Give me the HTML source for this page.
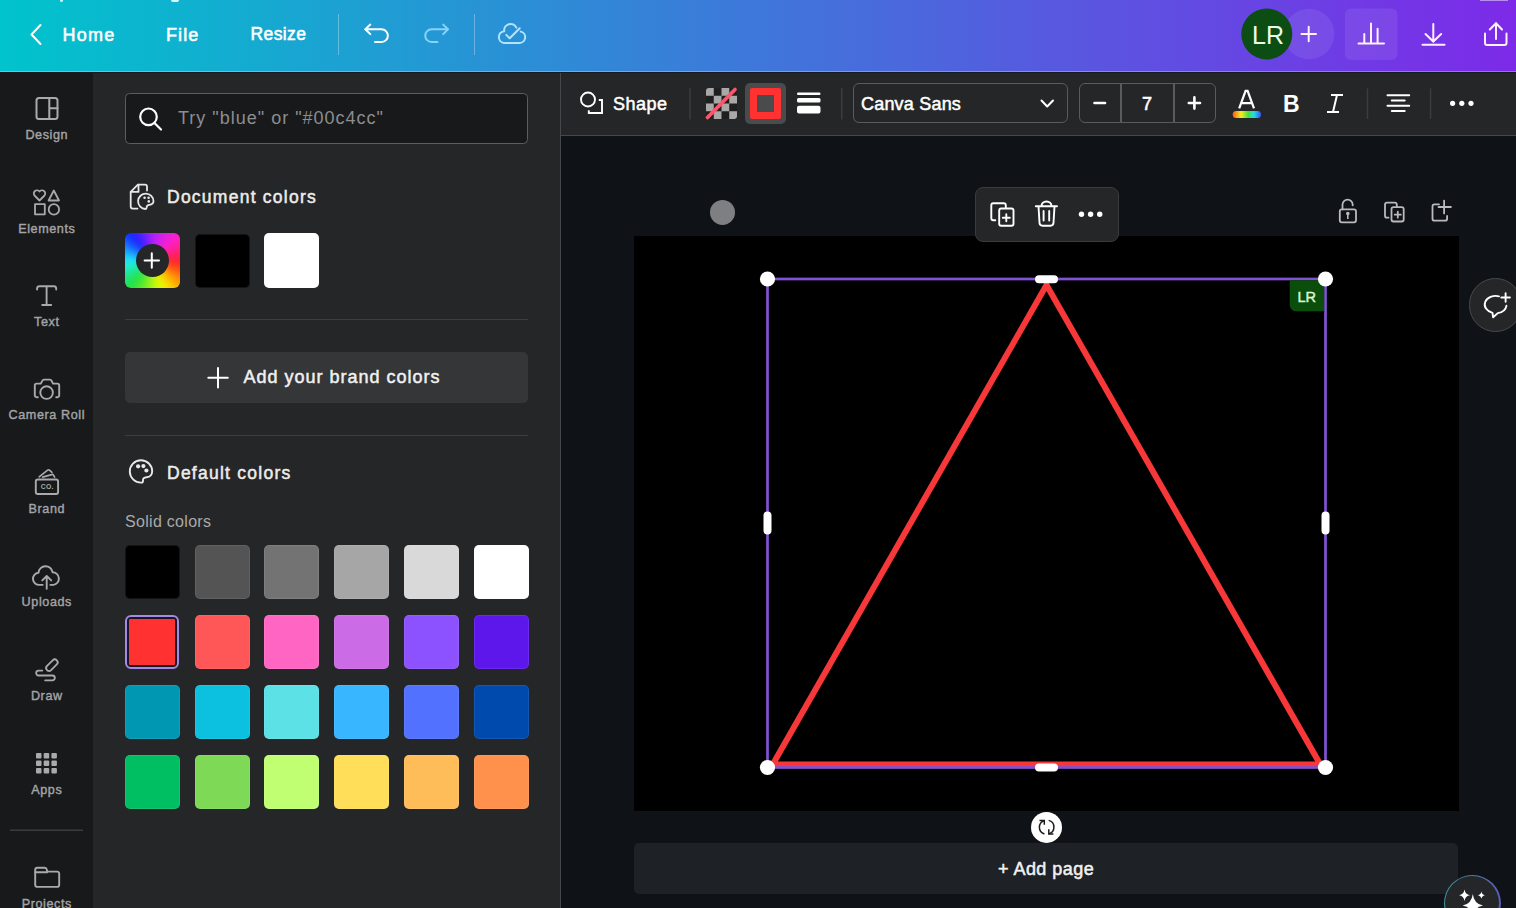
<!DOCTYPE html>
<html><head><meta charset="utf-8">
<style>
*{margin:0;padding:0;box-sizing:border-box}
html,body{width:1516px;height:908px;overflow:hidden;background:#0f1317;font-family:"Liberation Sans",sans-serif}
.a{position:absolute}
.t{position:absolute;line-height:1;white-space:nowrap}
svg{position:absolute;overflow:visible}
#top{left:0;top:0;width:1516px;height:72px;background:linear-gradient(90deg,#00c4cc 0%,#7d2ae8 100%)}
#topline{left:0;top:71px;width:1516px;height:1px;background:rgba(255,255,255,0.3)}
#topshadow{left:0;top:72px;width:1516px;height:1px;background:#141a22;z-index:3}
#side{left:0;top:72px;width:93px;height:836px;background:#18191b}
#panel{left:93px;top:72px;width:467px;height:836px;background:#252627}
#pborder{left:559.6px;top:72px;width:1.4px;height:836px;background:#45474a}
#tool{left:561px;top:72px;width:955px;height:64px;background:#252627;border-bottom:1.3px solid #45474a;z-index:2}
#canvas{left:561px;top:135px;width:955px;height:773px;background:none}
.tw{color:#fff;font-size:18px;-webkit-text-stroke:0.55px #fff}
.sl{color:#a3a4a6;font-size:12.6px;width:93px;left:0;text-align:center;-webkit-text-stroke:0.4px #a3a4a6;letter-spacing:0.6px;text-indent:0.6px;margin-top:0.1px}
.sw{position:absolute;width:55px;height:54px;border-radius:5px;box-shadow:inset 0 0 0 1px rgba(255,255,255,0.08)}
</style></head><body>
<!-- TOP BAR -->
<div class="a" id="top">
  <div class="a" style="left:1480px;top:0;width:28px;height:1px;background:#b98cf0"></div>
  <div class="a" style="left:60px;top:0;width:3px;height:1.5px;border-radius:0 0 2px 2px;background:#c8f6ff"></div>
  <div class="a" style="left:171px;top:0;width:8px;height:1.5px;border-radius:0 0 3px 3px;background:#d8f8ff"></div>
  <svg style="left:0;top:0" width="1516" height="72">
    <g fill="none" stroke="#fff" stroke-width="2" stroke-linecap="round" stroke-linejoin="round">
      <path d="M40.5 25 L31.5 34.5 L40.5 44"/>
      <!-- undo -->
      <path d="M370.3 24.6 L365.3 29.3 L370.3 34.1"/>
      <path d="M365.5 29.3 H381.5 A6.35 6.35 0 0 1 381.5 42 H375"/>
      <!-- cloud check -->
      <path d="M516.4 27.6 A6.45 6.45 0 0 0 504.2 31.2 A5.9 5.9 0 0 0 503.8 42.9 H518.8 A5.75 5.75 0 0 0 520.8 31.6" stroke-width="2" stroke="#aee5fd"/>
      <path d="M506.3 34.9 L509.7 38.3 L519.7 28.2" stroke-width="2" stroke="#aee5fd"/>
    </g>
    <g fill="none" stroke="#88d3f8" stroke-width="2" stroke-linecap="round" stroke-linejoin="round">
      <path d="M443.2 24.6 L448 29.3 L443.2 34.1"/>
      <path d="M447.7 29.3 H431.6 A6.35 6.35 0 0 0 431.6 42 H437.5"/>
    </g>
    <rect x="338" y="14" width="1" height="41" fill="rgba(255,255,255,0.3)"/>
    <rect x="474" y="14" width="1" height="41" fill="rgba(255,255,255,0.3)"/>
    <!-- plus button bg -->
    <circle cx="1309" cy="34" r="25.3" fill="rgba(255,255,255,0.08)"/>
    <circle cx="1266.8" cy="34" r="25.5" fill="#0b4d12"/>
    <rect x="1345" y="8.5" width="52.5" height="51.5" rx="6" fill="rgba(255,255,255,0.08)"/>
    <g fill="none" stroke="#fff0fc" stroke-width="2" stroke-linecap="round">
      <path d="M1301.5 34 H1316 M1308.7 26.8 V41.3"/>
      <path d="M1358.5 43.5 H1384 M1364.3 43.5 V34 M1371 43.5 V23.5 M1377.6 43.5 V28.8"/>
      <path d="M1433.3 24 V41 M1425.5 34 L1433.3 41.5 L1441.2 34 M1422.5 44.8 H1444.5"/>
      <path d="M1485 33.5 V43 A2 2 0 0 0 1487 45 H1504.5 A2 2 0 0 0 1506.5 43 V33.5 M1496 39 V23.5 M1489.8 29.5 L1496 23.2 L1502 29.5"/>
    </g>
  </svg>
  <div class="t tw" style="left:62.5px;top:25.5px;letter-spacing:1.25px">Home</div>
  <div class="t tw" style="left:166px;top:25.5px;letter-spacing:1.1px">File</div>
  <div class="t tw" style="left:250.5px;top:25.5px;font-size:17.5px;letter-spacing:0.4px">Resize</div>
  <div class="t" style="left:1252px;top:22.5px;font-size:25px;color:#eefce6">LR</div>
</div>
<div class="a" id="topline"></div>

<!-- SIDEBAR -->
<div class="a" id="side">
  <svg style="left:0;top:-72px" width="93" height="908">
    <g fill="none" stroke="#a9aaab" stroke-width="2" stroke-linecap="round" stroke-linejoin="round">
      <!-- design -->
      <rect x="36.5" y="98" width="21" height="21" rx="2.5"/>
      <path d="M49.3 98 V119 M49.3 108.2 H57.5"/>
      <!-- elements -->
      <path d="M39.5 200.5 L34.5 195.5 A2.9 2.9 0 0 1 39.5 191.5 A2.9 2.9 0 0 1 44.5 195.5 Z" stroke-width="1.8"/>
      <path d="M53.8 190.5 L59 200.5 H48.6 Z" stroke-width="1.8"/>
      <rect x="35" y="204.2" width="9.8" height="10.1" stroke-width="1.8"/>
      <circle cx="53.9" cy="209.4" r="5.2" stroke-width="1.8"/>
      <!-- text T -->
      <path d="M37.1 289.6 V288.6 A2.4 2.4 0 0 1 39.5 286.2 H53.8 A2.4 2.4 0 0 1 56.2 288.6 V289.6 M46.6 286.2 V305 M42.2 305 H51.2" stroke-width="1.9"/>
      <!-- camera -->
      <path d="M37.8 397.2 H36.6 A1.8 1.8 0 0 1 34.8 395.4 V385.4 A1.8 1.8 0 0 1 36.6 383.6 H40.8 L42.4 380.6 A1.8 1.8 0 0 1 43.9 379.6 H50 A1.8 1.8 0 0 1 51.5 380.6 L53 383.6 H57.4 A1.8 1.8 0 0 1 59.2 385.4 V395.4 A1.8 1.8 0 0 1 57.4 397.2 H56.2" stroke-width="1.9"/>
      <circle cx="46.6" cy="392.6" r="6.3" stroke-width="1.9"/>
      <!-- brand -->
      <rect x="35.8" y="479.5" width="22.3" height="14.5" rx="2" stroke-width="1.9"/>
      <path d="M39.2 476.8 L47.6 470.1 Q48.6 469.4 49.5 470.2 L51.9 472.4 M42.6 477.1 L51.6 474.6 Q52.7 474.2 53.4 475.1 L54.6 477" stroke-width="1.7"/>
      <!-- uploads -->
      <path d="M42.7 584.85 H39.6 A6.1 6.1 0 0 1 38.5 572.7 A7.05 7.05 0 0 1 52.5 572.2 A6.4 6.4 0 0 1 53.6 584.9 H50.4" stroke-width="1.9"/>
      <path d="M46.7 588.8 V576.4 M42.3 580.4 L46.7 576 L51.2 580.4" stroke-width="1.9"/>
      <!-- draw -->
      <rect x="45" y="662.3" width="13.8" height="5.8" rx="2.9" transform="rotate(-45 51.9 665.2)" stroke-width="1.8"/>
      <path d="M42.3 670.6 H38.6 A2.45 2.45 0 0 0 38.6 675.5 H52.4 A2.45 2.45 0 0 1 52.4 680.4 H45.2" stroke-width="1.8"/>
      <!-- projects -->
      <path d="M35.2 872.2 V870 A2.2 2.2 0 0 1 37.4 867.8 H44.6 A2.2 2.2 0 0 1 46.8 869.6 L47.2 871.6 H57 A2.2 2.2 0 0 1 59.2 873.8 V884.7 A2.2 2.2 0 0 1 57 886.9 H37.4 A2.2 2.2 0 0 1 35.2 884.7 Z" stroke-width="1.9"/>
      <path d="M35.2 872.2 H47.2" stroke-width="1.9"/>
    </g>
    <text x="47.2" y="489.2" font-size="6.8" font-weight="bold" fill="#a9aaab" text-anchor="middle" font-family="Liberation Sans" letter-spacing="0.3">CO.</text>
    <g fill="#a9aaab">
      <rect x="36" y="753" width="5.5" height="5.5" rx="1"/><rect x="43.7" y="753" width="5.5" height="5.5" rx="1"/><rect x="51.4" y="753" width="5.5" height="5.5" rx="1"/>
      <rect x="36" y="760.5" width="5.5" height="5.5" rx="1"/><rect x="43.7" y="760.5" width="5.5" height="5.5" rx="1"/><rect x="51.4" y="760.5" width="5.5" height="5.5" rx="1"/>
      <rect x="36" y="768" width="5.5" height="5.5" rx="1"/><rect x="43.7" y="768" width="5.5" height="5.5" rx="1"/><rect x="51.4" y="768" width="5.5" height="5.5" rx="1"/>
    </g>
    <rect x="10" y="829.5" width="73" height="1.5" fill="#3b3c3e"/>
  </svg>
  <div class="t sl" style="top:56.7px">Design</div>
  <div class="t sl" style="top:150.6px">Elements</div>
  <div class="t sl" style="top:243.8px">Text</div>
  <div class="t sl" style="top:337px">Camera Roll</div>
  <div class="t sl" style="top:430.8px">Brand</div>
  <div class="t sl" style="top:524.3px">Uploads</div>
  <div class="t sl" style="top:618.1px">Draw</div>
  <div class="t sl" style="top:711.6px">Apps</div>
  <div class="t sl" style="top:826px">Projects</div>
</div>

<!-- PANEL -->
<div class="a" id="panel">
  <div class="a" style="left:32px;top:20.8px;width:402.8px;height:51.5px;border:1.5px solid #5c5d5f;border-radius:4.5px;background:#18191b"></div>
  <div class="t" style="left:85px;top:37.2px;font-size:18px;color:#8c8d8f;letter-spacing:1px">Try "blue" or "#00c4cc"</div>
  <div class="t" style="left:74px;top:116.5px;font-size:17.5px;color:#ececec;letter-spacing:1.25px;-webkit-text-stroke:0.5px #ececec">Document colors</div>
  <div class="a" style="left:31.5px;top:161px;width:55px;height:55px;border-radius:6px;overflow:hidden">
    <div class="a" style="left:-20px;top:-20px;width:95px;height:95px;background:conic-gradient(from 0deg,#b020ff 0deg,#ff20d0 45deg,#ff2020 95deg,#ffb000 135deg,#f0ff00 160deg,#20e040 220deg,#20f0ff 270deg,#1020ff 320deg,#b020ff 360deg);filter:blur(4px)"></div>
    <div class="a" style="left:11px;top:11px;width:33px;height:33px;border-radius:50%;background:#252627"></div>
  </div>
  <div class="sw" style="left:101.5px;top:161.5px;background:#000"></div>
  <div class="sw" style="left:171px;top:161px;height:55px;background:#fff"></div>
  <div class="a" style="left:31.5px;top:246.5px;width:403.3px;height:1.5px;background:#3d3e40"></div>
  <div class="a" style="left:31.5px;top:279.5px;width:403.3px;height:51px;border-radius:5px;background:#353638"></div>
  <div class="t" style="left:150.5px;top:369.1px;font-size:18px;color:#f0f0f0;top:294.5px;letter-spacing:1px;margin-top:1.5px;-webkit-text-stroke:0.5px #f0f0f0">Add your brand colors</div>
  <div class="a" style="left:31.5px;top:362.5px;width:403.3px;height:1.5px;background:#3d3e40"></div>
  <div class="t" style="left:74px;top:393px;font-size:17.5px;color:#ececec;letter-spacing:1.25px;-webkit-text-stroke:0.5px #ececec">Default colors</div>
  <div class="t" style="left:32px;top:441.5px;font-size:16px;color:#a9aaab;letter-spacing:0.3px">Solid colors</div>
  <svg style="left:-93px;top:-72px" width="560" height="908">
    <g fill="none" stroke="#fff" stroke-linecap="round" stroke-linejoin="round">
      <circle cx="148.5" cy="116.8" r="8.3" stroke-width="2.2"/>
      <path d="M154.5 123 L161 129.5" stroke-width="2.2"/>
      <path d="M218 368 V387.5 M208.3 377.7 H227.8" stroke-width="2"/>
    </g>
    <g fill="none" stroke="#e8e8e8" stroke-width="1.8" stroke-linecap="round" stroke-linejoin="round">
      <!-- document colors icon -->
      <path d="M137.5 208.6 H132.7 A2 2 0 0 1 130.7 206.6 V191.9 L137.9 184.6 H145 A2 2 0 0 1 147 186.6 V190.5"/>
      <path d="M130.7 191.9 H138.5 V184.6"/>
      <path d="M145.5 209 A7.7 7.7 0 1 1 153.5 201.3 C153.4 203.6 151.5 204.6 149.5 204.8 C147.5 205 146.6 206 146.6 207.5 C146.6 208.6 146.3 209 145.5 209 Z"/>
      <!-- palette -->
      <path d="M141.5 482.6 A11.2 11.2 0 1 1 152.2 471.5 C152 475 149.5 477 146.5 477.3 C144 477.5 142.8 478.5 143 480.5 C143.1 482 142.5 482.6 141.5 482.6 Z" stroke-width="1.9"/>
    </g>
    <g fill="#e8e8e8">
      <circle cx="144.6" cy="197.7" r="1.3"/><circle cx="148.6" cy="197.7" r="1.3"/><circle cx="148.8" cy="201.4" r="1.3"/>
      <circle cx="138.1" cy="466.3" r="2.1"/><circle cx="143.4" cy="466.1" r="2.1"/><circle cx="146.4" cy="470.5" r="2.1"/>
    </g>
    <g fill="none" stroke="#fff" stroke-width="2" stroke-linecap="round">
      <path d="M151.8 253.3 V267.7 M144.6 260.5 H159"/>
    </g>
  </svg>
  <!-- default swatches -->
  <div class="sw" style="left:31.5px;top:473px;background:#000"></div>
  <div class="sw" style="left:101.5px;top:473px;background:#545454"></div>
  <div class="sw" style="left:171px;top:473px;background:#737373"></div>
  <div class="sw" style="left:241px;top:473px;background:#a6a6a6"></div>
  <div class="sw" style="left:311px;top:473px;background:#d9d9d9"></div>
  <div class="sw" style="left:381px;top:473px;background:#ffffff"></div>

  <div class="a" style="left:31.5px;top:542.5px;width:54.5px;height:54.5px;border-radius:6px;border:2.6px solid #a48ae6;background:#1a1626;padding:2px"><div style="width:100%;height:100%;background:#ff3131;border-radius:1px"></div></div>
  <div class="sw" style="left:101.5px;top:543px;background:#ff5757"></div>
  <div class="sw" style="left:171px;top:543px;background:#ff66c4"></div>
  <div class="sw" style="left:241px;top:543px;background:#cb6ce6"></div>
  <div class="sw" style="left:311px;top:543px;background:#8c52ff"></div>
  <div class="sw" style="left:381px;top:543px;background:#5e17eb"></div>

  <div class="sw" style="left:31.5px;top:613px;background:#0097b2"></div>
  <div class="sw" style="left:101.5px;top:613px;background:#0cc0df"></div>
  <div class="sw" style="left:171px;top:613px;background:#5ce1e6"></div>
  <div class="sw" style="left:241px;top:613px;background:#38b6ff"></div>
  <div class="sw" style="left:311px;top:613px;background:#5271ff"></div>
  <div class="sw" style="left:381px;top:613px;background:#004aad"></div>

  <div class="sw" style="left:31.5px;top:683px;background:#00bf63"></div>
  <div class="sw" style="left:101.5px;top:683px;background:#7ed957"></div>
  <div class="sw" style="left:171px;top:683px;background:#c1ff72"></div>
  <div class="sw" style="left:241px;top:683px;background:#ffde59"></div>
  <div class="sw" style="left:311px;top:683px;background:#ffbd59"></div>
  <div class="sw" style="left:381px;top:683px;background:#ff914d"></div>
</div>
<div class="a" id="pborder"></div>

<!-- TOOLBAR -->
<div class="a" id="tool">
  <div class="t" style="left:52px;top:22.5px;font-size:18px;color:#fff;-webkit-text-stroke:0.5px #fff;letter-spacing:0.5px">Shape</div>
  <!-- checker -->
  <div class="a" style="left:145px;top:16px;width:31px;height:31px;border-radius:3px;overflow:hidden;background:conic-gradient(#1f1f1f 25%,#a8a8a8 0 50%,#1f1f1f 0 75%,#a8a8a8 0) 0 0/15.5px 15.5px"></div>
  <div class="a" style="left:183.5px;top:10.5px;width:41px;height:41.5px;border-radius:5px;background:#4a4b4d"></div>
  <div class="a" style="left:189px;top:15.6px;width:31px;height:31px;border:7.7px solid #ff3131;border-radius:2px;background:#4a4b4d"></div>
  <div class="a" style="left:291.5px;top:10.7px;width:215.5px;height:40.7px;border:1.5px solid #5a5b5d;border-radius:6px"></div>
  <div class="t" style="left:300px;top:22.5px;font-size:18px;color:#fff;-webkit-text-stroke:0.5px #fff;letter-spacing:0.2px">Canva Sans</div>
  <div class="a" style="left:517.7px;top:10.7px;width:137px;height:40.7px;border:1.5px solid #5a5b5d;border-radius:6px"></div>
  <div class="a" style="left:559px;top:11.5px;width:1.5px;height:39px;background:#5a5b5d"></div>
  <div class="a" style="left:612px;top:11.5px;width:1.5px;height:39px;background:#5a5b5d"></div>
  <div class="t" style="left:581px;top:22.5px;font-size:18px;color:#fff;-webkit-text-stroke:0.6px #fff">7</div>
  <svg style="left:-561px;top:-72px" width="1516" height="200">
    <g fill="none" stroke="#fff" stroke-linecap="round" stroke-linejoin="round">
      <circle cx="588" cy="99.5" r="7" stroke-width="1.9"/>
      <path d="M588.8 110.2 V113 H602 V100 H598.8" stroke-width="1.9" stroke-linecap="butt" stroke-linejoin="miter"/>
      <path d="M1041.5 100.5 L1047.2 106.5 L1053 100.5" stroke-width="2"/>
      <path d="M1094.5 103 H1105" stroke-width="2.6"/>
      <path d="M1188.8 103 H1200 M1194.4 97.4 V108.6" stroke-width="2.6"/>
      <!-- A -->
      <path d="M1239.2 108.4 L1245.6 90.9 H1247.6 L1254 108.4 M1241.6 103.2 H1251.5" stroke-width="2.2" stroke-linejoin="miter" stroke-linecap="butt"/>
      <!-- italic I -->
      <path d="M1331 95 H1343 M1327 112 H1339 M1337 95 L1333 112" stroke-width="2" stroke-linecap="butt"/>
      <!-- align -->
      <path d="M1387.5 95.2 H1409.2 M1391.8 100.4 H1404.7 M1387.5 105.7 H1409.2 M1391.8 110.9 H1404.7" stroke-width="2"/>
    </g>
    <g fill="#fff">
      <rect x="797" y="92.5" width="23.5" height="2.4" rx="1.2"/>
      <rect x="797" y="98" width="23.5" height="4.5" rx="1.5"/>
      <rect x="797" y="105.8" width="23.5" height="7.8" rx="2"/>
      <circle cx="1452.6" cy="103.3" r="2.6"/><circle cx="1461.8" cy="103.3" r="2.6"/><circle cx="1471" cy="103.3" r="2.6"/>
    </g>
    <path d="M707.5 117.5 L735 89.5" stroke="#f7566c" stroke-width="3.8" stroke-linecap="round"/>
    <text x="1283" y="112.2" font-family="Liberation Sans" font-weight="bold" font-size="23" fill="#fff">B</text>
    <defs><linearGradient id="rb" x1="0" x2="1"><stop offset="0" stop-color="#ff5a1e"/><stop offset="0.3" stop-color="#f2ee22"/><stop offset="0.55" stop-color="#48e03a"/><stop offset="0.75" stop-color="#22dcec"/><stop offset="1" stop-color="#3a52f2"/></linearGradient></defs>
    <rect x="1232.7" y="111" width="28.3" height="7" rx="3.5" fill="url(#rb)"/>
    <g fill="#3b3c3e">
      <rect x="689.2" y="88" width="1.5" height="31.5"/>
      <rect x="841" y="88" width="1.5" height="31.5"/>
      <rect x="1366.7" y="88.3" width="1.5" height="30.6"/>
      <rect x="1429.8" y="88.3" width="1.5" height="30.6"/>
    </g>
  </svg>
</div>

<!-- CANVAS -->
<div class="a" id="canvas">
  <!-- page -->
  <div class="a" style="left:72.7px;top:100.5px;width:825px;height:575px;background:#000"></div>
  <div class="a" style="left:72.7px;top:707.8px;width:824.5px;height:51.5px;border-radius:5px;background:#1e2125"></div>
  <div class="t" style="left:437px;top:724.5px;font-size:18px;color:#f2f2f2;-webkit-text-stroke:0.5px #f2f2f2;letter-spacing:0.45px">+ Add page</div>
  <!-- floating toolbar -->
  <div class="a" style="left:414px;top:52px;width:143.5px;height:54.5px;border-radius:8px;background:#252628;border:1px solid #3a3b3d"></div>
  <!-- comment button -->
  <div class="a" style="left:907.5px;top:143.3px;width:53.5px;height:53.5px;border-radius:50%;background:#252628;border:1.5px solid #48494b"></div>
  <!-- ai button -->
  <div class="a" style="left:882.5px;top:739.5px;width:57.5px;height:57.5px;border-radius:50%;background:linear-gradient(90deg,#3f9aa2,#5a5cb8)"></div>
  <div class="a" style="left:884.3px;top:741.3px;width:53.9px;height:53.9px;border-radius:50%;background:#252628"></div>
  <svg style="left:-561px;top:-135px" width="1516" height="908">
    <defs>
      <clipPath id="tri"><path d="M1046.5 279 L767.5 767.5 L1325.5 767.5 Z"/></clipPath>
    </defs>
    <circle cx="722.5" cy="212.4" r="12.5" fill="#7e7f82"/>
    <!-- triangle -->
    <path d="M1046.5 279 L767.5 767.5 L1325.5 767.5 Z" fill="none" stroke="#f83838" stroke-width="12" clip-path="url(#tri)"/>
    <!-- selection -->
    <rect x="767.5" y="279" width="558" height="488.5" fill="none" stroke="#8252d4" stroke-width="2.7"/>
    <!-- LR badge -->
    <path d="M1289.7 280.3 H1324.2 V311.3 H1296 A6.3 6.3 0 0 1 1289.7 305 Z" fill="#0b4d0b"/>
    <g fill="#fff">
      <circle cx="767.5" cy="279" r="7.6"/>
      <circle cx="1325.5" cy="279" r="7.6"/>
      <circle cx="767.5" cy="767.5" r="7.6"/>
      <circle cx="1325.5" cy="767.5" r="7.6"/>
      <rect x="1035" y="275.3" width="23" height="8" rx="4"/>
      <rect x="1035" y="763.5" width="23" height="8" rx="4"/>
      <rect x="763.5" y="511.5" width="8" height="23" rx="4"/>
      <rect x="1321.5" y="511.5" width="8" height="23" rx="4"/>
      <circle cx="1046.5" cy="827.4" r="15.5"/>
    </g>
    <!-- rotate icon -->
    <g fill="none" stroke="#1b1b1b" stroke-width="1.5" stroke-linecap="butt" stroke-linejoin="miter">
      <path d="M1044.3 820.6 A7 7 0 0 0 1044.4 834"/>
      <path d="M1039.5 820.4 H1044.3 V824.7"/>
      <path d="M1048.7 820.4 A7 7 0 0 1 1048.8 833.9"/>
      <path d="M1048.8 829.3 V834 H1053.4"/>
    </g>
    <!-- floating toolbar icons -->
    <g fill="none" stroke="#fff" stroke-width="1.9" stroke-linecap="round" stroke-linejoin="round">
      <path d="M995.3 220.2 H993.3 A2 2 0 0 1 991.3 218.2 V205.3 A2 2 0 0 1 993.3 203.3 H1003.8 A2 2 0 0 1 1005.8 205.3 V207.8"/>
      <rect x="999.2" y="208.5" width="14.3" height="17.2" rx="2"/>
      <path d="M1006.3 214.2 V221.2 M1002.8 217.7 H1009.8"/>
      <path d="M1035.8 206.3 H1057 M1038.5 206.3 L1039.5 222.8 A3 3 0 0 0 1042.5 225.7 H1050.5 A3 3 0 0 0 1053.5 222.8 L1054.5 206.3 M1041.5 206 A5 4.5 0 0 1 1051.5 206 M1043.6 211 V220.5 M1049.2 211 V220.5"/>
    </g>
    <g fill="#fff">
      <circle cx="1081.5" cy="214.2" r="2.7"/><circle cx="1090.6" cy="214.2" r="2.7"/><circle cx="1099.7" cy="214.2" r="2.7"/>
    </g>
    <!-- right icons -->
    <g fill="none" stroke="#b9babc" stroke-width="1.8" stroke-linecap="round" stroke-linejoin="round">
      <rect x="1339.8" y="209.3" width="16.2" height="13" rx="2"/>
      <path d="M1342.5 209.3 V204.8 A5.1 5.1 0 0 1 1352.7 204.8 V205.3"/>
      <path d="M1388.5 217.7 H1387 A2 2 0 0 1 1385 215.7 V204.7 A2 2 0 0 1 1387 202.7 H1394.8 A2 2 0 0 1 1396.8 204.7 V206.5"/>
      <rect x="1391.5" y="207.2" width="12.2" height="14.3" rx="2"/>
      <path d="M1397.8 211.7 V217.7 M1394.8 214.7 H1400.8"/>
      <path d="M1439 204.4 H1434.5 A2 2 0 0 0 1432.5 206.4 V218.7 A2 2 0 0 0 1434.5 220.7 H1445.1 A2 2 0 0 0 1447.1 218.7 V216"/>
      <path d="M1444.1 200.6 V213.4 M1438.5 207 H1450.9"/>
    </g>
    <g fill="#b9babc"><circle cx="1347.8" cy="213.6" r="1.8"/><rect x="1347" y="214" width="1.6" height="5"/></g>
    <!-- comment icon -->
    <g fill="none" stroke="#fff" stroke-width="1.9" stroke-linecap="round" stroke-linejoin="round">
      <path d="M1499 296.3 A11 8.6 0 0 0 1492.5 312.8 L1493.1 317.3 L1497.8 313.1 A11 8.6 0 0 0 1506.4 305.8"/>
      <path d="M1505.6 293.2 V301.8 M1501.3 297.5 H1509.9"/>
    </g>
    <!-- sparkles -->
    <g fill="#fff">
      <path d="M1464.5 889.5 Q1465.3 894.5 1470 895.2 Q1465.3 895.9 1464.5 900.9 Q1463.7 895.9 1459 895.2 Q1463.7 894.5 1464.5 889.5 Z"/>
      <path d="M1481.4 891.6 Q1481.9 894.7 1484.9 895.2 Q1481.9 895.7 1481.4 898.8 Q1480.9 895.7 1477.9 895.2 Q1480.9 894.7 1481.4 891.6 Z"/>
      <path d="M1472.8 894 Q1474 904 1483 905.5 Q1474 907 1472.8 917 Q1471.6 907 1462.6 905.5 Q1471.6 904 1472.8 894 Z"/>
    </g>
  </svg>
  <div class="t" style="left:736.5px;top:154.5px;font-size:14.5px;color:#dcf5d4;-webkit-text-stroke:0.45px #dcf5d4">LR</div>
</div>
<div class="a" id="topshadow"></div>
</body></html>
